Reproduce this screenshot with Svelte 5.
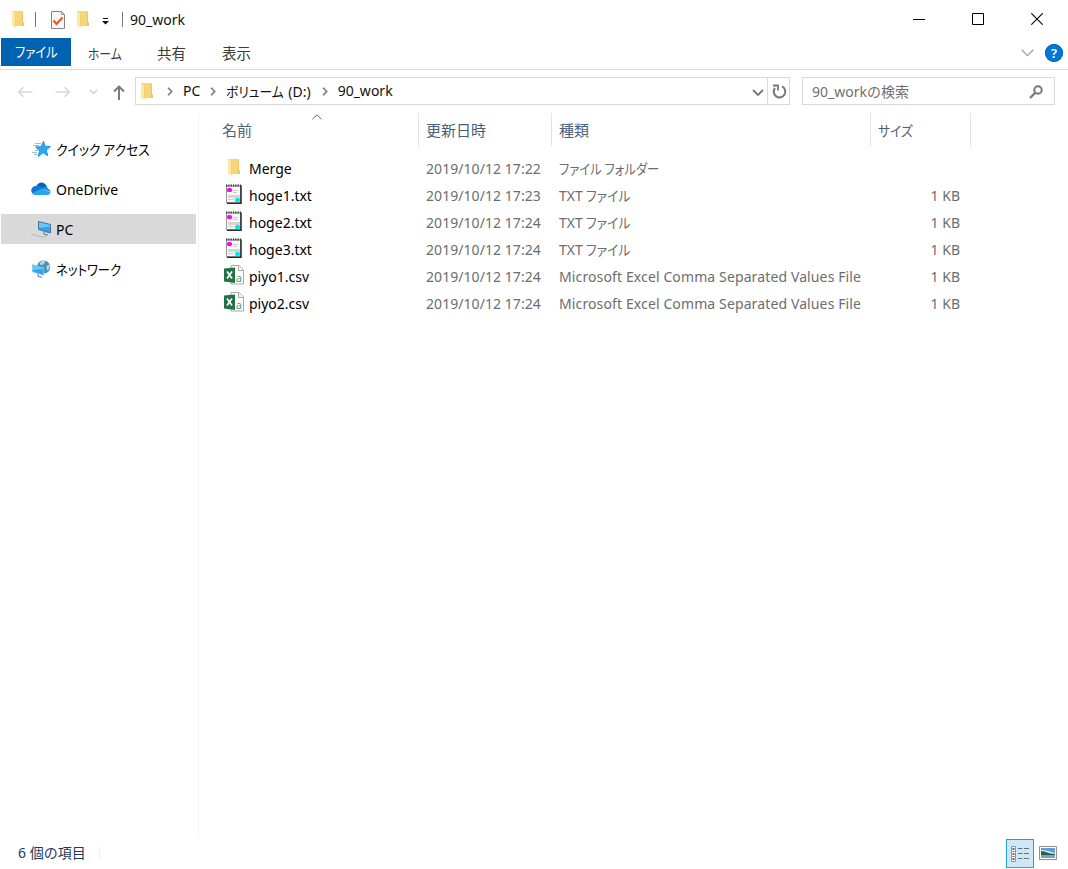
<script lang="ts">
    interface FileEntry {
        name: string;
        modified: string;
        kind: 'folder' | 'txt' | 'csv';
        size: string;
    }

    const files: FileEntry[] = [
        { name: 'Merge', modified: '2019/10/12 17:22', kind: 'folder', size: '' },
        { name: 'hoge1.txt', modified: '2019/10/12 17:23', kind: 'txt', size: '1 KB' },
        { name: 'hoge2.txt', modified: '2019/10/12 17:24', kind: 'txt', size: '1 KB' },
        { name: 'hoge3.txt', modified: '2019/10/12 17:24', kind: 'txt', size: '1 KB' },
        { name: 'piyo1.csv', modified: '2019/10/12 17:24', kind: 'csv', size: '1 KB' },
        { name: 'piyo2.csv', modified: '2019/10/12 17:24', kind: 'csv', size: '1 KB' }
    ];

    const places = ['quick', 'onedrive', 'pc', 'network'];
    let selectedPlace = $state('pc');
    let view = $state('details');
</script>

{#snippet folder()}
    <svg width="14" height="18" viewBox="0 0 14 18">
        <path d="M1 1h11v11l1 1v3H1z" fill="#f7d67a" />
        <path d="M11 2h1v10l1 1v3h-2z" fill="#efc55c" />
        <path d="M1 1l3.500 2.500V18L1 15.500z" fill="#ffe8a6" />
        <path d="M4.500 3.500V17" stroke="#eac567" stroke-width=".6" />
    </svg>
{/snippet}

{#snippet crumbArrow()}
    <svg class="crumb-arrow" width="6" height="9" viewBox="0 0 6 9">
        <path d="M1 .7l3.700 3.800L1 8.300" fill="none" stroke="#777" stroke-width="1.600" />
    </svg>
{/snippet}

<div class="window">
    <header class="title-bar">
        <span class="app-icon">{@render folder()}</span>
        <i class="bar first"></i>
        <svg class="check" width="16" height="18" viewBox="0 0 16 18">
            <path d="M1.500.5h10l3 3v14h-13z" fill="#f6f6f6" stroke="#858585" />
            <path d="M11.500.5v3h3" fill="none" stroke="#999" />
            <path d="M3.500 9.500l3 3.500 6-6.500" fill="none" stroke="#e8551c" stroke-width="2" />
        </svg>
        <span class="new-folder">{@render folder()}</span>
        <svg class="customize" width="7" height="7" viewBox="0 0 7 7">
            <path d="M1 0h5v1H1zM0 3h7L3.500 6.500z" fill="#111" />
        </svg>
        <i class="bar second"></i>
        <span class="title">90_work</span>
        <div class="controls">
            <svg width="12" height="12"><path d="M0 6.500h12" stroke="#000" /></svg>
            <svg width="12" height="12"><path d="M.5.5h11v11H.5z" fill="none" stroke="#000" /></svg>
            <svg width="12" height="12"><path d="M.3.3l11.400 11.400M11.700.3L.3 11.700" stroke="#000" stroke-width="1.100" /></svg>
        </div>
    </header>

    <nav class="ribbon">
        <button class="file-tab"><span class="kana file-label">ファイル</span></button>
        <button class="tab home"><span class="kana home-label">ホーム</span></button>
        <button class="tab share">共有</button>
        <button class="tab show">表示</button>
        <div class="ribbon-end">
            <svg width="13" height="8" viewBox="0 0 13 8"><path d="M.7.8l5.800 5.800L12.300.8" fill="none" stroke="#a0a0a0" stroke-width="1.300" /></svg>
            <span class="help">?</span>
        </div>
    </nav>

    <div class="address-row">
        <div class="nav-arrows">
            <svg width="16" height="12" viewBox="0 0 16 12"><path d="M15.500 6H1.500M6.500 1l-5 5 5 5" fill="none" stroke="#d9d9d9" stroke-width="1.500" /></svg>
            <svg class="forward" width="16" height="12" viewBox="0 0 16 12"><path d="M.5 6h14M9.500 1l5 5-5 5" fill="none" stroke="#d9d9d9" stroke-width="1.500" /></svg>
            <svg class="recent" width="9" height="6" viewBox="0 0 9 6"><path d="M.7.8l3.800 3.700L8.300.8" fill="none" stroke="#d0d0d0" stroke-width="1.400" /></svg>
            <svg class="up" width="12" height="15" viewBox="0 0 12 15"><path d="M6 15V1.500M1 6.500l5-5 5 5" fill="none" stroke="#777" stroke-width="1.900" /></svg>
        </div>
        <div class="address">
            <span class="address-folder">{@render folder()}</span>
            {@render crumbArrow()}
            <span class="crumb">PC</span>
            {@render crumbArrow()}
            <span class="crumb drive"><span class="kana drive-label">ボリューム</span> (D:)</span>
            {@render crumbArrow()}
            <span class="crumb">90_work</span>
            <svg class="history" width="12" height="8" viewBox="0 0 12 8"><path d="M1 1l5 5 5-5" fill="none" stroke="#777" stroke-width="1.900" /></svg>
            <div class="refresh">
                <svg width="15" height="15" viewBox="0 0 15 15">
                    <path d="M10 2.400A5.800 5.800 0 1 1 3 4" fill="none" stroke="#777" stroke-width="2" />
                    <path d="M1 1.500h5v5" fill="none" stroke="#777" stroke-width="1.800" />
                </svg>
            </div>
        </div>
        <div class="search">
            <span>90_workの検索</span>
            <svg width="14" height="14" viewBox="0 0 14 14">
                <circle cx="9" cy="5" r="3.700" fill="none" stroke="#777" stroke-width="2" />
                <path d="M6.300 7.700L1 13" stroke="#777" stroke-width="2.200" />
            </svg>
        </div>
    </div>

    <div class="body">
        <aside>
            {#each places as place (place)}
                <button class="place" class:selected={selectedPlace === place} onclick={() => (selectedPlace = place)}>
                    {#if place === 'quick'}
                        <svg width="20" height="18" viewBox="0 0 20 18">
                            <path d="M4 3.500h6M2 5.500h6M4 10.500h3M1 12.500h5M3 14.500h3" stroke="#8fc2e6" />
                            <path d="M12.500 1.200l1.500 5 5.500.3-4.200 3.500 1.500 5.800-4.700-3-5 3.700 1.500-5.800L4.500 7l5.700-.6z" fill="#2ba9f5" stroke="#1883cc" stroke-width=".8" />
                        </svg>
                        <span class="kana quick-label">クイック アクセス</span>
                    {:else if place === 'onedrive'}
                        <svg width="20" height="18" viewBox="0 0 20 18">
                            <path d="M5 7C7 1 14 1 16 7l-5 3z" fill="#0364b8" />
                            <path d="M5 15a4.500 4.500 0 1 1 1-8.800c3-.8 5 .8 7 2.300z" fill="#0f78d4" />
                            <path d="M11 8.500l2-1.500c2-1 4 0 4 2 1.500.2 2.600 1.500 2.700 3z" fill="#1490df" />
                            <path d="M1.500 13l9.500-4.500 8.500 4c-.4 1.700-1.500 2.500-3.500 2.500H5c-1.500 0-2.800-.7-3.500-2z" fill="#28a8ea" />
                        </svg>
                        <span class="latin">OneDrive</span>
                    {:else if place === 'pc'}
                        <svg width="20" height="18" viewBox="0 0 20 18">
                            <path d="M7.500 1.500l12 3v8.500l-12-3.500z" fill="#2ba3f2" stroke="#53748b" />
                            <path d="M8 2.200l11 2.800v1.500L8 8z" fill="#65c8ff" />
                            <path d="M13 12v2l4 1" fill="none" stroke="#687780" />
                            <path d="M.5 14.200l11 3 5-2" fill="none" stroke="#a4b2bc" stroke-dasharray="2 .6" />
                        </svg>
                        <span class="latin">PC</span>
                    {:else}
                        <svg width="20" height="18" viewBox="0 0 20 18">
                            <circle cx="12.500" cy="7" r="6.600" fill="#4f8fb3" />
                            <path d="M8.500 3c2-2.500 5-2.500 6-1.500l-2 3-3 .5zM15.500 6l2.800-1.500c.8 3-.3 5-2.300 6z" fill="#b3dce5" />
                            <path d="M1.500 4.700l11 3v7.500l-11-3.500z" fill="#2ba3f2" stroke="#8fc5e2" stroke-width=".8" />
                            <path d="M2 5.400l10 2.700v1L2 10z" fill="#65c8ff" />
                            <path d="M7 14v2.300l4 1" fill="none" stroke="#627986" />
                        </svg>
                        <span class="kana network-label">ネットワーク</span>
                    {/if}
                </button>
            {/each}
        </aside>

        <main>
            <div class="columns">
                <div class="col name-col">
                    名前
                    <svg class="sort" width="10" height="6" viewBox="0 0 10 6"><path d="M.5 5.200L5 .8l4.500 4.400" fill="none" stroke="#606060" /></svg>
                </div>
                <div class="col">更新日時</div>
                <div class="col">種類</div>
                <div class="col"><span class="kana size-label">サイズ</span></div>
            </div>
            <div class="rows">
                {#each files as file (file.name)}
                    <div class="row">
                        <div class="name">
                            <span class="file-icon">
                                {#if file.kind === 'folder'}
                                    {@render folder()}
                                {:else if file.kind === 'txt'}
                                    <svg width="20" height="22" viewBox="0 0 20 22">
                                        <path d="M2.500 3h14v17h-14z" fill="#f8f8f8" stroke="#999" />
                                        <path d="M17 2.500V20.300H3" fill="none" stroke="#292929" stroke-width="1.500" />
                                        <path d="M2 2.500h15" stroke="#333" stroke-width="2.200" stroke-dasharray="1.300 1" />
                                        <path d="M9 7.500h5M9 9.500h4M4 16.500h6" stroke="#ccc" />
                                        <path d="M4 12h12v3H4z" fill="#d4d4d4" />
                                        <rect x="3" y="5" width="5" height="4" rx="1.500" fill="#f0f" />
                                        <rect x="11" y="15" width="5" height="4" rx="1.500" fill="#00e8ee" />
                                    </svg>
                                {:else}
                                    <svg width="20" height="22" viewBox="0 0 20 22">
                                        <path d="M7 1.500h8l4.500 4.500v14H7z" fill="#fff" stroke="#a8a8a8" />
                                        <path d="M14.500 1.500v5h5" fill="none" stroke="#a8a8a8" />
                                        <path d="M0 4.500l11-1v15.500L0 17.500z" fill="#217346" />
                                        <path d="M3 7.500l5 7M8 7.500l-5 7" stroke="#fff" stroke-width="1.700" />
                                        <text x="11.800" y="17.800" font-size="11" fill="#4aa57b">a</text>
                                    </svg>
                                {/if}
                            </span>
                            <span>{file.name}</span>
                        </div>
                        <div class="date">{file.modified}</div>
                        <div class="type">
                            {#if file.kind === 'folder'}
                                <span class="kana folder-type">ファイル フォルダー</span>
                            {:else if file.kind === 'txt'}
                                TXT <span class="kana txt-type">ファイル</span>
                            {:else}
                                <span class="csv-type">Microsoft Excel Comma Separated Values File</span>
                            {/if}
                        </div>
                        <div class="size">{file.size}</div>
                    </div>
                {/each}
            </div>
        </main>
    </div>

    <footer>
        <span class="count">6 個の項目</span>
        <div class="views">
            <button class="view" class:active={view === 'details'} onclick={() => (view = 'details')} aria-label="詳細">
                <svg width="20" height="18" viewBox="0 0 20 18">
                    <path d="M1.500 1.500h4v5h-4zM1.500 6.500h4v5h-4zM1.500 11.500h4v5h-4z" fill="#fff" stroke="#929292" />
                    <path d="M2.500 3h2v2h-2z" fill="#287baf" />
                    <path d="M2.500 8h2v2h-2z" fill="#8b7242" />
                    <path d="M2.500 13h2v2h-2z" fill="#d33b2d" />
                    <path d="M8 3.500h4.500M14 3.500h5M8 8.500h4.500M14 8.500h5M8 13.500h4.500M14 13.500h5" stroke="#707070" />
                </svg>
            </button>
            <button class="view" class:active={view === 'thumbs'} onclick={() => (view = 'thumbs')} aria-label="大アイコン">
                <svg class="thumb" width="18" height="14" viewBox="0 0 18 14">
                    <path d="M.5.5h17v13H.5z" fill="#fff" stroke="#929292" />
                    <path d="M2 2h14v10H2z" fill="#5b9fdc" />
                    <path d="M2 4c4 0 7 1 10 2l4 1v1H2z" fill="#dfeff5" />
                    <path d="M2 5c5 0 7 3 14 3v1H2z" fill="#285f48" />
                    <path d="M2 9h14v3H2z" fill="#7ba5bd" />
                </svg>
            </button>
        </div>
    </footer>
</div>

<style>
    :global(body) {
        background: #fff;
        overflow: hidden;
    }

    .window {
        width: 1068px;
        height: 869px;
        display: flex;
        flex-direction: column;
        color: #111;
        font: 14px/20px "Noto Sans", "Noto Sans CJK JP", sans-serif;
        white-space: nowrap;
    }

    svg {
        display: block;
        flex: none;
    }

    button {
        border: 0;
        padding: 0;
        margin: 0;
        background: none;
        color: inherit;
        font: inherit;
    }

    /* Narrow UI kana */
    .kana {
        display: inline-block;
        font-family: "Noto Sans CJK JP", sans-serif;
        font-feature-settings: "palt";
        transform-origin: left center;
    }

    .file-label,
    .network-label,
    .folder-type {
        transform: scaleX(.88);
    }

    .home-label {
        transform: scaleX(.84);
    }

    .quick-label,
    .txt-type,
    .size-label {
        transform: scaleX(.915);
    }

    .drive-label {
        margin-right: -5px;
        transform: scaleX(.91);
    }

    .title-bar {
        height: 38px;
        display: flex;
        align-items: center;
        padding: 0 25px 0 11px;
    }

    .title {
        padding-top: 2px;
    }

    .bar {
        width: 1px;
        height: 15px;
        background: #777;
    }

    .bar.first {
        margin: 0 14px 0 10px;
    }

    .check {
        margin-top: 2px;
    }

    .new-folder {
        margin: 0 11px 0 10px;
    }

    .customize {
        margin: 4px 0 0 1px;
    }

    .bar.second {
        margin: 0 7px 0 13px;
    }

    .controls {
        display: flex;
        gap: 47px;
        margin-left: auto;
    }

    .ribbon {
        height: 31px;
        display: flex;
        align-items: flex-start;
        padding-left: 1px;
        border-bottom: 1px solid #dadada;
        color: #3c3c3c;
    }

    .ribbon button {
        height: 28px;
        text-align: left;
        padding-top: 2px;
    }

    .ribbon .file-tab {
        width: 70px;
        padding: 0 0 2px 14px;
        background: #0063b1;
        color: #fff;
    }

    .tab.home {
        width: 69px;
        padding-left: 17px;
    }

    .tab.share,
    .tab.show {
        font-size: 14.5px;
    }

    .tab.share {
        width: 65px;
        padding-left: 17px;
    }

    .tab.show {
        padding-left: 17px;
    }

    .ribbon-end {
        display: flex;
        align-items: center;
        gap: 11px;
        margin: 6px 5px 0 auto;
    }

    .help {
        width: 18px;
        height: 18px;
        border-radius: 50%;
        background: #0078d7;
        box-shadow: inset 0 0 0 1px #0065b5;
        color: #fff;
        text-align: center;
        font-size: 13px;
        font-weight: 600;
        line-height: 18px;
    }

    .address-row {
        height: 43px;
        display: flex;
        align-items: flex-start;
        padding-top: 7px;
        box-sizing: border-box;
    }

    .nav-arrows {
        width: 118px;
        height: 30px;
        padding-left: 17px;
        display: flex;
        align-items: center;
    }

    .forward {
        margin-left: 22px;
    }

    .recent {
        margin-left: 18px;
    }

    .up {
        margin-left: 15px;
    }

    .address {
        width: 655px;
        height: 28px;
        box-sizing: border-box;
        border: 1px solid #d9d9d9;
        display: flex;
        align-items: center;
    }

    .address-folder {
        margin: -1px 13px 0 4px;
    }

    .crumb {
        margin: 0 10px 0 10px;
    }

    .crumb.drive {
        margin-right: 11px;
    }

    .history {
        margin-left: auto;
        margin-top: 3px;
        margin-right: 3px;
    }

    .refresh {
        width: 20px;
        height: 26px;
        border-left: 1px solid #d9d9d9;
        display: flex;
        align-items: center;
        justify-content: center;
        padding-left: 1px;
    }

    .search {
        width: 253px;
        height: 28px;
        margin-left: 12px;
        box-sizing: border-box;
        border: 1px solid #d9d9d9;
        display: flex;
        align-items: center;
        justify-content: space-between;
        padding: 1px 11px 0 9px;
        color: #707070;
    }

    .body {
        height: 725px;
        display: flex;
    }

    aside {
        width: 199px;
        box-sizing: border-box;
        border-right: 1px solid #f2f2f2;
        padding: 21px 2px 0 1px;
        display: flex;
        flex-direction: column;
        gap: 10px;
        color: #000;
    }

    .place {
        height: 30px;
        display: flex;
        align-items: center;
        gap: 5px;
        padding-left: 30px;
    }

    .place.selected {
        background: #d9d9d9;
    }

    .latin {
        padding-top: 2px;
    }

    .columns {
        display: grid;
        grid-template-columns: 220px 133px 319px 100px;
        height: 33px;
        color: #4c607a;
        font-size: 15px;
    }

    .col {
        border-right: 1px solid #e3e3e3;
        padding: 7px 0 0 7px;
    }

    .size-label {
        font-size: 14px;
    }

    .name-col {
        position: relative;
        padding-left: 23px;
    }

    .sort {
        position: absolute;
        left: 113px;
        top: 1px;
    }

    .rows {
        padding-top: 9px;
    }

    .row {
        height: 27px;
        display: grid;
        grid-template-columns: 202px 133px 311px 90px;
        align-items: center;
        padding-left: 25px;
        color: #6d6d6d;
    }

    .name {
        display: flex;
        align-items: center;
        color: #000;
    }

    .file-icon {
        width: 20px;
        margin-right: 5px;
        margin-top: -3px;
        display: flex;
        justify-content: center;
    }

    .date {
        letter-spacing: .06px;
    }

    .csv-type {
        letter-spacing: .12px;
    }

    .size {
        text-align: right;
    }

    footer {
        height: 31px;
        display: flex;
        justify-content: space-between;
        color: #1e395b;
    }

    .count {
        height: 12px;
        margin-top: 9px;
        padding: 0 13px 0 18px;
        border-right: 1px solid #eee;
        line-height: 12px;
    }

    .views {
        display: flex;
        margin: 1px 6px 0 0;
    }

    .view {
        width: 28px;
        height: 29px;
        box-sizing: border-box;
        display: flex;
        align-items: center;
        justify-content: center;
    }

    .view.active {
        background: #cce8f6;
        border: 1px solid #26a0da;
    }

    .thumb {
        margin-top: -1px;
    }
</style>
